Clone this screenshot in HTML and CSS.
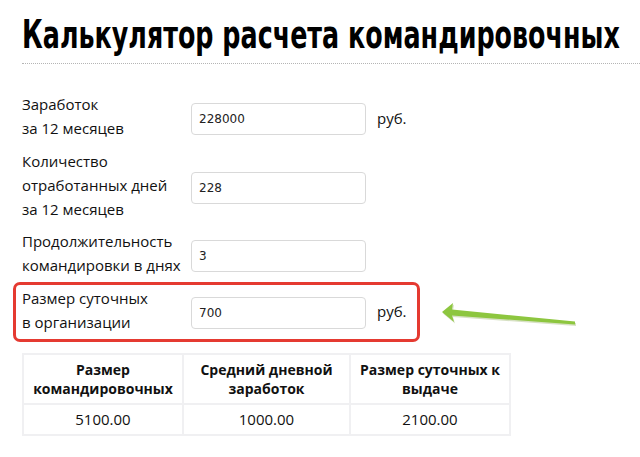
FILE: index.html
```html
<!DOCTYPE html>
<html lang="ru">
<head>
  <meta charset="UTF-8">
  <title>Калькулятор расчета командировочных</title>
  <link rel="stylesheet" href="styles.css">
</head>
<body>

<div class="page">
  <h1><span class="title">Калькулятор расчета командировочных</span></h1>

  <div class="calc">
    <div class="row">
      <label>Заработок<br>за 12 месяцев</label>
      <input type="text" value="228000">
      <span class="unit">руб.</span>
    </div>
    <div class="row">
      <label>Количество<br>отработанных дней<br>за 12 месяцев</label>
      <input type="text" value="228">
    </div>
    <div class="row">
      <label>Продолжительность<br>командировки в днях</label>
      <input type="text" value="3">
    </div>
    <div class="row marked">
      <label>Размер суточных<br>в организации</label>
      <input type="text" value="700">
      <span class="unit">руб.</span>
      <svg class="arrow" width="150" height="36" viewBox="0 0 150 36">
        <path d="M11 14 L22 5 L21 11.5 L144 23.5 L144 26.5 L21 17.5 L23 24 Z" fill="#7c9a3a" opacity="0.3" transform="translate(1 1.5)"/>
        <path d="M11 14 L22 5 L21 11.5 L144 23.5 L144 26.5 L21 17.5 L23 24 Z" fill="#8dc63f"/>
      </svg>
    </div>
  </div>

  <table class="result">
    <tr>
      <th class="c1">Размер командировочных</th>
      <th class="c2">Средний дневной заработок</th>
      <th class="c3">Размер суточных к выдаче</th>
    </tr>
    <tr>
      <td>5100.00</td>
      <td>1000.00</td>
      <td>2100.00</td>
    </tr>
  </table>
</div>

</body>
</html>
```

FILE: styles.css
```css
body {
  margin: 0;
  padding: 0;
  font-family: "Open Sans", Arial, sans-serif;
  background: #fff;
  color: #111;
}
.page {
  padding-left: 22px;
}
h1 {
  margin: 12px 0 0;
  padding-bottom: 5px;
  font-family: "DejaVu Sans Condensed", "DejaVu Sans", sans-serif;
  font-size: 29px;
  line-height: 46px;
  font-weight: bold;
  color: #000;
  border-bottom: 1px dotted #b5b5b5;
  white-space: nowrap;
}
/* the heading font is narrower and taller than anything installed */
.title {
  display: inline-block;
  transform: scale(0.973, 1.34);
  transform-origin: left center;
}
.calc {
  margin-top: 28px;
}
.row {
  display: flex;
  align-items: center;
  margin-bottom: 8.5px;
}
.row label {
  width: 169px;
  font-size: 15px;
  line-height: 24px;
}
.row input {
  width: 175px;
  height: 32px;
  box-sizing: border-box;
  margin: 6px 0 0;
  padding: 0 7px;
  border: 1px solid #d9d9d9;
  border-radius: 4px;
  font-family: "DejaVu Sans", sans-serif;
  font-size: 12px;
  color: #222;
}
.unit {
  margin-left: 11px;
  margin-top: 3px;
  font-size: 15px;
}
.marked {
  position: relative;
}
.marked::after {
  content: "";
  position: absolute;
  left: -9px;
  top: -4px;
  width: 407px;
  height: 60px;
  box-sizing: border-box;
  border: 3px solid #e53a31;
  border-radius: 7px;
}
.arrow {
  position: absolute;
  left: 409px;
  top: 12px;
}
.result {
  margin-top: 19px;
  border-collapse: collapse;
  border: 2px solid #f0f0f2;
}
.result th, .result td {
  border: 2px solid #f0f0f2;
  text-align: center;
}
.result th {
  height: 44px;
  padding: 2px 8px;
  font-size: 14px;
  line-height: 19px;
  font-weight: bold;
}
.result td {
  height: 27px;
  padding: 1px 8px;
  font-size: 15px;
}
.c1 { width: 142px; }
.c2 { width: 149px; }
.c3 { width: 142px; }
```
